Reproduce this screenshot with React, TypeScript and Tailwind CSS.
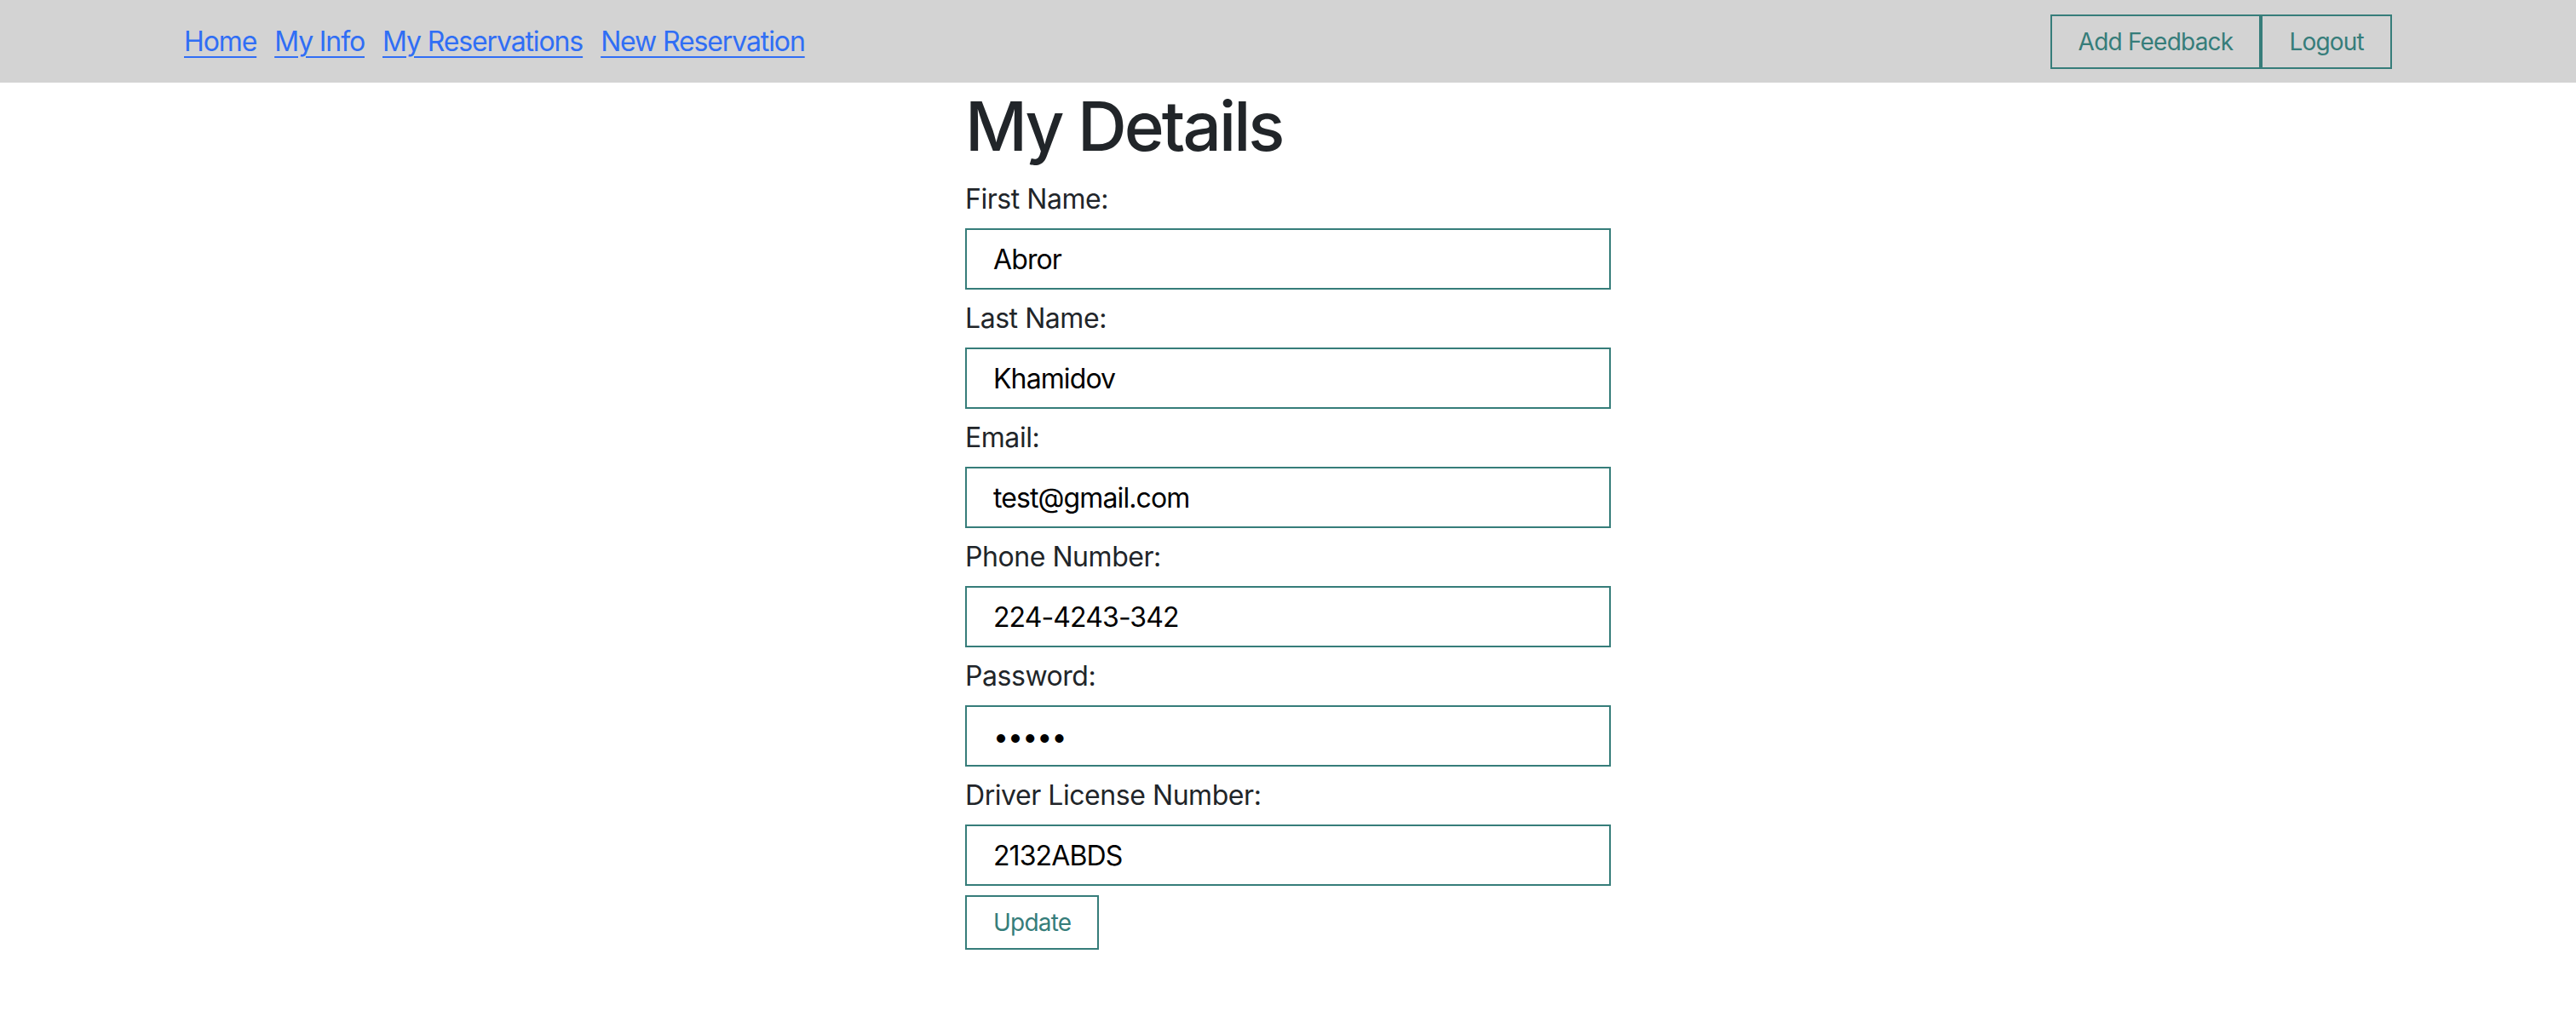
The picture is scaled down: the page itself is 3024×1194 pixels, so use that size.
const links = ["Home", "My Info", "My Reservations", "New Reservation"];

const fields = [
  { label: "First Name:", value: "Abror", type: "text" },
  { label: "Last Name:", value: "Khamidov", type: "text" },
  { label: "Email:", value: "test@gmail.com", type: "email" },
  { label: "Phone Number:", value: "224-4243-342", type: "text" },
  { label: "Password:", value: "abcde", type: "password" },
  { label: "Driver License Number:", value: "2132ABDS", type: "text" },
];

const App = () => {
  return (
    <div className="min-h-screen bg-white font-[Inter,'Noto_Sans',sans-serif] tracking-[-0.028em] text-[#212529]">
      <nav className="h-[97px] bg-[#d3d3d3]">
        <div className="mx-[216px] flex h-full items-center justify-between">
          <div className="flex gap-[21px] text-[32px] leading-[48px] tracking-[-0.035em]">
            {links.map((l) => (
              <a
                key={l}
                href="#"
                className="text-[#306ef5] underline decoration-2 underline-offset-[6px]"
              >
                {l}
              </a>
            ))}
          </div>
          <div className="flex">
            <button className="h-[64px] border-2 border-[#367d7a] px-[31px] text-[28px] tracking-[-0.028em] text-[#367d7a]">
              Add Feedback
            </button>
            <button className="h-[64px] border-2 border-[#367d7a] px-[31px] text-[28px] tracking-[-0.028em] text-[#367d7a]">
              Logout
            </button>
          </div>
        </div>
      </nav>

      <main className="mx-auto w-[758px]">
        <h1 className="mb-[14px] pt-[3px] text-[80px] font-medium leading-[96px] tracking-[-0.037em]">
          My Details
        </h1>
        <form className="flex flex-col">
          {fields.map((f, i) => (
            <div key={f.label} className={i > 0 ? "mt-[10px]" : ""}>
              <label className="mb-[10px] block text-[32px] leading-[48px]">
                {f.label}
              </label>
              <input
                type={f.type}
                defaultValue={f.value}
                className="block h-[72px] w-full border-2 border-[#367d7a] px-[31px] text-[32px] tracking-[-0.028em] text-black outline-none"
              />
            </div>
          ))}
          <div className="mt-[11px]">
            <button
              type="button"
              className="h-[64px] border-2 border-[#367d7a] px-[31px] text-[28px] tracking-[-0.028em] text-[#367d7a]"
            >
              Update
            </button>
          </div>
        </form>
      </main>
    </div>
  );
};

export default App;
